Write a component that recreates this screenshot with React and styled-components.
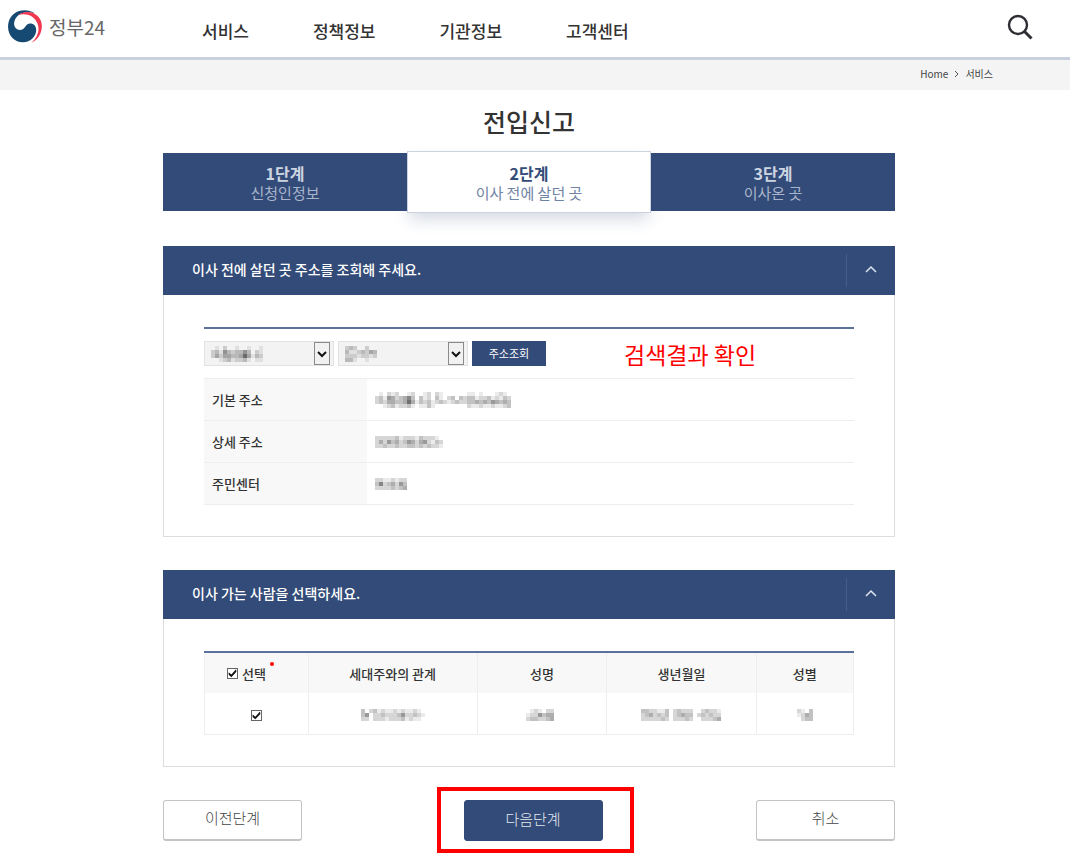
import { useState } from "react"
import styled, { createGlobalStyle } from "styled-components"

const GlobalStyle = createGlobalStyle`
  * {
    box-sizing: border-box;
  }
  body {
    margin: 0;
    background-color: #fff;
    color: #333;
    font-family: "Noto Sans CJK KR", "Noto Sans", sans-serif;
    font-size: 13px;
  }
  button, select, input {
    font-family: inherit;
  }
`
const Header = styled.header`
  display: flex;
  align-items: center;
  height: 60px;
  padding: 0 37px 4px 7px;
  border-bottom: 3px solid #c9d1df;
  box-shadow: 0 1px 2px #e3e5ec;
`
const Logo = styled.a`
  display: flex;
  align-items: center;
  gap: 7px;
  width: 195px;
  color: #666;
  font-size: 19px;
  line-height: 28px;
  text-decoration: none;
`
const Nav = styled.nav`
  display: flex;
  flex: 1;
  gap: 64px;
  padding-top: 8px;
`
const NavLink = styled.a`
  color: #333;
  font-size: 17px;
  font-weight: 500;
  line-height: 24px;
  text-decoration: none;
`
const SearchButton = styled.button`
  display: flex;
  padding: 0;
  border: 0;
  background: none;
  color: #2d2d33;
  cursor: pointer;
`
const Breadcrumb = styled.nav`
  display: flex;
  align-items: center;
  justify-content: flex-end;
  gap: 6px;
  height: 30px;
  padding: 0 77px 3px 0;
  background-color: #f4f4f4;
  color: #555;
  font-size: 10px;
`
const Crumb = styled.a`
  color: #444;
  text-decoration: none;
`
const Page = styled.div`
  padding: 0 12px 14px 0;
`
const Container = styled.main`
  max-width: 732px;
  margin: 0 auto;
`
const Title = styled.h1`
  margin: 0;
  padding: 13px 0 14px;
  font-size: 25px;
  font-weight: 500;
  line-height: 36px;
  text-align: center;
`
const Steps = styled.ol`
  display: flex;
  margin: 0 0 35px;
  padding: 0;
  list-style: none;
`
const Step = styled.li`
  position: relative;
  z-index: ${props => props.$active ? "0" : "1"};
  flex: 1;
  margin: ${props => props.$active ? "-2px 0" : "0"};
  padding: ${props => props.$active ? "11px 0 9px" : "9px 0 7px"};
  border: 1px solid ${props => props.$active ? "#ccd3e0" : "#334b78"};
  background-color: ${props => props.$active ? "#fff" : "#334b78"};
  box-shadow: ${props => props.$active ? "0 8px 16px -2px #d3d8e2" : "none"};
  color: ${props => props.$active ? "#6f83a5" : "#a9b5cb"};
  font-size: 15px;
  line-height: 20px;
  text-align: center;
`
const StepNumber = styled.strong`
  display: block;
  color: ${props => props.$active ? "#334b78" : "#cdd5e2"};
  font-size: 16px;
`
const Panel = styled.section`
  margin-bottom: 33px;
`
const PanelHeader = styled.div`
  display: flex;
  align-items: center;
  height: 49px;
  padding-left: 29px;
  background-color: #334b78;
`
const PanelTitle = styled.h2`
  flex: 1;
  margin: 0;
  padding-bottom: 3px;
  color: #fff;
  font-size: 14px;
  font-weight: 500;
`
const Toggle = styled.button`
  display: flex;
  align-items: center;
  justify-content: center;
  width: 49px;
  height: 33px;
  padding: 0 0 3px;
  border: 0;
  border-left: 1px solid #455d89;
  background: none;
  color: #dfe5ef;
  cursor: pointer;

  svg {
    transform: ${props => props.$open ? "none" : "rotate(180deg)"};
  }
`
const PanelBody = styled.div`
  padding: 32px 40px 31px;
  border: 1px solid #ddd;
  border-top: 0;
`
const SearchRow = styled.form`
  display: flex;
  align-items: center;
  height: 51px;
  border-top: 2px solid #5b719b;
`
const SelectBox = styled.div`
  position: relative;
  width: 130px;
  height: 25px;
  margin-right: 4px;
`
const Select = styled.select`
  appearance: none;
  width: 100%;
  height: 100%;
  border: 1px solid #e2e2e2;
  border-radius: 0;
  background-color: #f3f3f3;
`
const SelectValue = styled.span`
  position: absolute;
  top: 5px;
  left: 7px;
  display: flex;
  pointer-events: none;
`
const SelectArrow = styled.span`
  position: absolute;
  top: 1px;
  right: 4px;
  display: flex;
  align-items: center;
  justify-content: center;
  width: 16px;
  height: 23px;
  border: 1px solid #8a8a8a;
  background-color: #f1f1f1;
  pointer-events: none;
`
const LookupButton = styled.button`
  width: 74px;
  height: 25px;
  padding: 0 0 1px;
  border: 0;
  background-color: #334b78;
  color: #fff;
  font-size: 11px;
  cursor: pointer;
`
const Note = styled.strong`
  margin-left: 78px;
  color: #f00;
  font-size: 23px;
  font-weight: 400;
  line-height: 30px;
`
const AddressTable = styled.table`
  width: 100%;
  border-collapse: collapse;
  border-top: 1px solid #eee;

  tr {
    height: 42px;
    border-bottom: 1px solid #eee;
  }
  th {
    width: 25%;
    padding: 0 0 0 8px;
    background-color: #f8f8f8;
    font-size: 13px;
    font-weight: 500;
    text-align: left;
  }
  td {
    padding: 0 8px;
  }
  td svg {
    display: block;
  }
`
const PeopleTable = styled.table`
  width: 100%;
  border-collapse: collapse;
  border-top: 2px solid #5b719b;
  table-layout: fixed;

  th, td {
    height: 41px;
    padding: 0;
    border: 1px solid #eee;
    text-align: center;
  }
  th {
    border-top: 0;
    border-bottom: 0;
    background-color: #f8f8f8;
    font-size: 13px;
    font-weight: 500;
  }
  td {
    border-top: 0;
  }
`
const Col = styled.col`
  width: ${props => props.$width};
`
const CheckLabel = styled.label`
  position: relative;
  display: inline-flex;
  align-items: center;
  gap: 4px;
  margin-right: 20px;
`
const RequiredDot = styled.i`
  position: absolute;
  top: -2px;
  right: -8px;
  width: 4px;
  height: 4px;
  border-radius: 50%;
  background-color: #f00;
`
const Checkbox = styled.input`
  appearance: none;
  width: 11px;
  height: 11px;
  margin: 0;
  border: 1px solid #666;
  background-color: #fff;
  vertical-align: middle;

  &:checked::after {
    content: "";
    display: block;
    width: 9px;
    height: 9px;
    background-color: #111;
    clip-path: polygon(8% 42%, 38% 66%, 90% 8%, 94% 36%, 38% 96%, 8% 70%);
  }
`
const Mosaic = styled.svg`
  vertical-align: middle;
`
const Actions = styled.div`
  display: flex;
  align-items: center;
  justify-content: space-between;
`
const Marked = styled.div`
  position: relative;
  margin-left: 8px;

  &::after {
    content: "";
    position: absolute;
    inset: -13px -31px -12px -27px;
    border: 4px solid #f00;
    pointer-events: none;
  }
`
const ActionButton = styled.button`
  display: block;
  width: 139px;
  height: 41px;
  padding: 0 0 4px;
  border: 1px solid ${props => props.$primary ? "#334b78" : "#c4c4c4"};
  border-bottom-width: ${props => props.$primary ? "1px" : "2px"};
  border-radius: 3px;
  background-color: ${props => props.$primary ? "#334b78" : "#fff"};
  color: ${props => props.$primary ? "#e3e8f0" : "#444"};
  font-size: 15px;
  font-weight: 300;
  cursor: pointer;
`

const menus = ["서비스", "정책정보", "기관정보", "고객센터"]

const steps = [
  { number: "1단계", name: "신청인정보" },
  { number: "2단계", name: "이사 전에 살던 곳", active: true },
  { number: "3단계", name: "이사온 곳" },
]

// masked values: one digit per 4px cell, 0 is clear and 9 is the darkest
const masks = {
  city: ["0102001001001", "2315323353021", "2424433474132", "0012312231011"],
  district: ["23200200", "31123243", "22212212", "33100100"],
  address: [
    "0102120012001202100000011010001210",
    "2315423463031203102303233122312132",
    "2324433474132312321232233434354343",
    "0012312231011310000000021121121123",
  ],
  detail: ["22222312221322210", "24253423542452132", "22322322332323221"],
  center: ["22112122", "36234253", "22223234"],
  relation: ["3023121121211210", "3502232223522321", "2202221222312110"],
  name: ["01210220", "12253440", "23322340"],
  birth: ["0332211302322200232210", "0234232302343302323220", "0222223202223200222340"],
  gender: ["2103", "1243", "0233"],
}

const addressRows = [
  { label: "기본 주소", mask: "address" },
  { label: "상세 주소", mask: "detail" },
  { label: "주민센터", mask: "center" },
]

const Masked = ({ name }) => {
  const rows = masks[name]
  return (
    <Mosaic width={rows[0].length * 4} height={rows.length * 4} role="img" aria-label="비공개" shapeRendering="crispEdges">
      {rows.map((row, y) => row.split("").map((cell, x) => (
        cell !== "0" && (
          <rect key={x + "-" + y} x={x * 4} y={y * 4} width="4" height="4" fill="#000" opacity={cell * 0.08} />
        )
      )))}
    </Mosaic>
  )
}

const SelectField = ({ label, mask }) => (
  <SelectBox>
    <Select aria-label={label} />
    <SelectValue><Masked name={mask} /></SelectValue>
    <SelectArrow>
      <svg width="10" height="8" viewBox="0 0 10 8" fill="none" stroke="#111" strokeWidth="2">
        <path d="M1 2l4 4 4-4" />
      </svg>
    </SelectArrow>
  </SelectBox>
)

const Section = ({ title, children }) => {
  const [open, setOpen] = useState(true)

  return (
    <Panel>
      <PanelHeader>
        <PanelTitle>{title}</PanelTitle>
        <Toggle type="button" $open={open} aria-expanded={open} aria-label={title} onClick={() => setOpen(!open)}>
          <svg width="12" height="8" viewBox="0 0 12 8" fill="none" stroke="currentColor" strokeWidth="1.5">
            <path d="M1 7l5-5 5 5" />
          </svg>
        </Toggle>
      </PanelHeader>
      {open && <PanelBody>{children}</PanelBody>}
    </Panel>
  )
}

const App = () => {
  const [checked, setChecked] = useState(true)
  const toggleChecked = () => setChecked(!checked)

  return (
    <>
      <GlobalStyle />
      <Header>
        <Logo href="#">
          <svg width="35" height="35" viewBox="0 0 35 35">
            <path d="M28 4.500C18-2.500 4 2 1.500 13.500C-1 25 7 33.500 16 33.300C24 33 29.500 27 29.200 20.500C29 16 25.500 14 22.500 14.500C18.500 15 18.300 20 14.500 20.800C10 21.500 6.500 18 7.200 13.500C8.500 5 18 1 28 4.500Z" fill="#174a72" />
            <path d="M11 6C20-0.500 34 4 34.800 16C35.300 24 31 31 24.500 33.700C31 28 33 21 30.500 14.500C27.500 6.500 19 3.500 11 6Z" fill="#f2384f" />
          </svg>
          정부24
        </Logo>
        <Nav>
          {menus.map((menu) => <NavLink href="#" key={menu}>{menu}</NavLink>)}
        </Nav>
        <SearchButton type="button" aria-label="검색">
          <svg width="26" height="26" viewBox="0 0 26 26" fill="none" stroke="currentColor" strokeWidth="2.400">
            <circle cx="11" cy="11" r="9" />
            <path d="M17.500 17.500L24.500 24.500" strokeWidth="3" />
          </svg>
        </SearchButton>
      </Header>
      <Breadcrumb aria-label="현재 위치">
        <Crumb href="#">Home</Crumb>
        <svg width="5" height="8" viewBox="0 0 5 8" fill="none" stroke="currentColor">
          <path d="M1 1l3 3-3 3" />
        </svg>
        <Crumb href="#">서비스</Crumb>
      </Breadcrumb>
      <Page>
        <Container>
          <Title>전입신고</Title>
          <Steps>
            {steps.map((step) => (
              <Step key={step.number} $active={step.active}>
                <StepNumber $active={step.active}>{step.number}</StepNumber>
                {step.name}
              </Step>
            ))}
          </Steps>

          <Section title="이사 전에 살던 곳 주소를 조회해 주세요.">
            <SearchRow onSubmit={(e) => e.preventDefault()}>
              <SelectField label="시도" mask="city" />
              <SelectField label="시군구" mask="district" />
              <LookupButton type="submit">주소조회</LookupButton>
              <Note>검색결과 확인</Note>
            </SearchRow>
            <AddressTable>
              <tbody>
                {addressRows.map((row) => (
                  <tr key={row.label}>
                    <th scope="row">{row.label}</th>
                    <td><Masked name={row.mask} /></td>
                  </tr>
                ))}
              </tbody>
            </AddressTable>
          </Section>

          <Section title="이사 가는 사람을 선택하세요.">
            <PeopleTable>
              <colgroup>
                <Col $width="16%" />
                <Col $width="26%" />
                <Col $width="20%" />
                <Col $width="23%" />
                <Col $width="15%" />
              </colgroup>
              <thead>
                <tr>
                  <th scope="col">
                    <CheckLabel>
                      <Checkbox type="checkbox" checked={checked} onChange={toggleChecked} />
                      선택
                      <RequiredDot />
                    </CheckLabel>
                  </th>
                  <th scope="col">세대주와의 관계</th>
                  <th scope="col">성명</th>
                  <th scope="col">생년월일</th>
                  <th scope="col">성별</th>
                </tr>
              </thead>
              <tbody>
                <tr>
                  <td><Checkbox type="checkbox" aria-label="선택" checked={checked} onChange={toggleChecked} /></td>
                  <td><Masked name="relation" /></td>
                  <td><Masked name="name" /></td>
                  <td><Masked name="birth" /></td>
                  <td><Masked name="gender" /></td>
                </tr>
              </tbody>
            </PeopleTable>
          </Section>

          <Actions>
            <ActionButton type="button">이전단계</ActionButton>
            <Marked>
              <ActionButton type="button" $primary>다음단계</ActionButton>
            </Marked>
            <ActionButton type="button">취소</ActionButton>
          </Actions>
        </Container>
      </Page>
    </>
  )
}

export default App
